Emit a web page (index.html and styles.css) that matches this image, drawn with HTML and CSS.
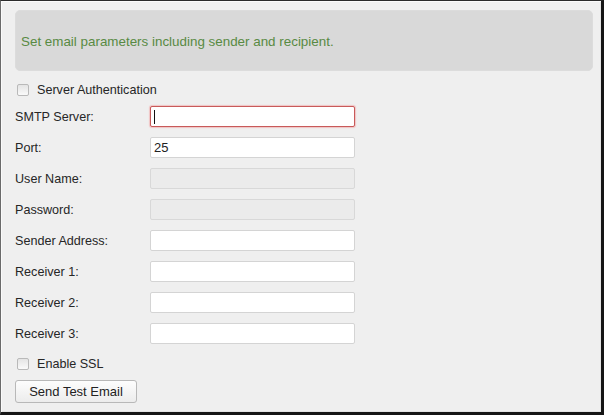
FILE: index.html
```html
<!DOCTYPE html>
<html lang="en">
<head>
    <meta charset="UTF-8">
    <title>Email</title>
    <link rel="stylesheet" href="styles.css">
</head>
<body>
    <div class="frame">
        <div class="notice">Set email parameters including sender and recipient.</div>

        <label class="check-row">
            <span class="check-box"></span>
            <span>Server Authentication</span>
        </label>

        <div class="form">
            <div class="form-row">
                <span class="form-label">SMTP Server:</span>
                <span class="field field-focus"><span class="caret"></span></span>
            </div>
            <div class="form-row">
                <span class="form-label">Port:</span>
                <span class="field">25</span>
            </div>
            <div class="form-row">
                <span class="form-label">User Name:</span>
                <span class="field field-off"></span>
            </div>
            <div class="form-row">
                <span class="form-label">Password:</span>
                <span class="field field-off"></span>
            </div>
            <div class="form-row">
                <span class="form-label">Sender Address:</span>
                <span class="field"></span>
            </div>
            <div class="form-row">
                <span class="form-label">Receiver 1:</span>
                <span class="field"></span>
            </div>
            <div class="form-row">
                <span class="form-label">Receiver 2:</span>
                <span class="field"></span>
            </div>
            <div class="form-row">
                <span class="form-label">Receiver 3:</span>
                <span class="field"></span>
            </div>
        </div>

        <label class="check-row check-ssl">
            <span class="check-box"></span>
            <span>Enable SSL</span>
        </label>

        <button class="test-btn">Send Test Email</button>
    </div>
</body>
</html>
```

FILE: styles.css
```css
html, body {
    margin: 0;
    height: 100%;
}
body {
    font-family: "Liberation Sans", Arial, sans-serif;
    font-size: 12.6px;
    color: #262626;
    background: #111;
}
.frame {
    box-sizing: border-box;
    width: 604px;
    height: 415px;
    border-top: 1px solid #2a2a2a;
    border-left: 1px solid #6a6a6a;
    border-right: 3px solid #151515;
    border-bottom: 3px solid #151515;
    background-color: #efefef;
    box-shadow: inset 1px 1px 0 #fafafa, inset -1px -1px 0 #e2e2e2;
    padding: 9px 0 0 14px;
    display: flex;
    flex-direction: column;
    align-items: flex-start;
}
.notice {
    box-sizing: border-box;
    width: 578px;
    height: 61px;
    background-color: #d9d9d9;
    border: 1px solid #dcdcdc;
    border-radius: 5px;
    color: #588a43;
    font-size: 13.4px;
    padding: 2px 5px 0;
    display: flex;
    align-items: center;
}
.check-row {
    display: flex;
    align-items: center;
    height: 20px;
    margin-top: 9px;
    padding-left: 2px;
    gap: 8px;
}
.check-box {
    box-sizing: border-box;
    width: 12px;
    height: 12px;
    border: 1px solid #b9b9b9;
    border-radius: 2px;
    background: linear-gradient(#e4e4e4, #fafafa);
}
.form {
    display: flex;
    flex-direction: column;
    gap: 10px;
    margin-top: 6px;
}
.form-row {
    display: flex;
    align-items: center;
    height: 21px;
}
.form-label {
    width: 135px;
}
.field {
    box-sizing: border-box;
    width: 205px;
    height: 21px;
    background-color: #fff;
    border: 1px solid #d4d4d4;
    border-radius: 2px;
    padding-left: 3px;
    display: flex;
    align-items: center;
    font-size: 13px;
    color: #222;
}
.field-focus {
    border: 1px solid #c85a5a;
    box-shadow: 0 0 1px 1px #f0c4c4;
}
.caret {
    width: 1px;
    height: 14px;
    background-color: #111;
}
.field-off {
    background-color: #ebebeb;
    border-color: #d8d8d8;
}
.check-ssl {
    margin-top: 10px;
}
.test-btn {
    box-sizing: border-box;
    width: 122px;
    height: 23px;
    margin-top: 6px;
    border: 1px solid #b8b8b8;
    border-radius: 3px;
    background: linear-gradient(#fdfdfd, #ececec);
    font-family: inherit;
    font-size: 13px;
    color: #222;
    padding: 0;
}
```
